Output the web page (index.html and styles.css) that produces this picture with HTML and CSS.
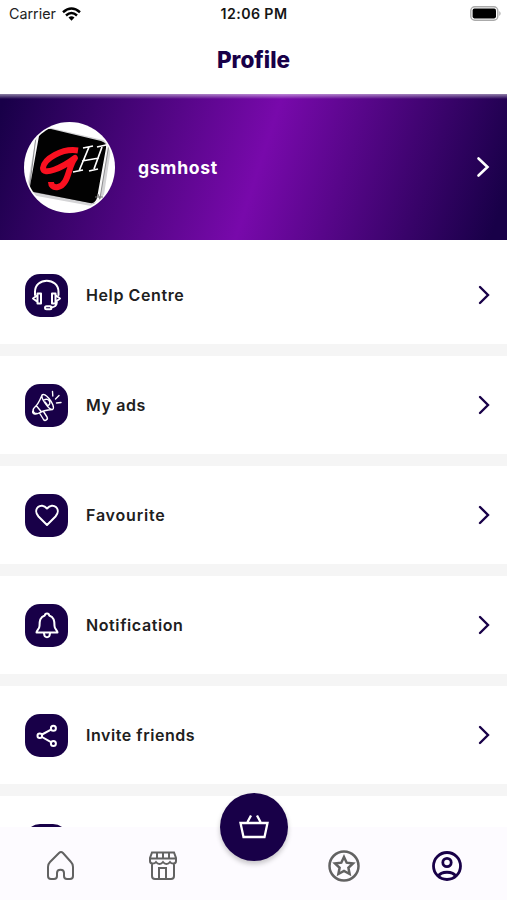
FILE: index.html
```html
<!DOCTYPE html>
<html lang="en">
<head>
<meta charset="utf-8">
<meta name="viewport" content="width=device-width, initial-scale=1">
<title>Profile</title>
<link rel="stylesheet" href="styles.css">
</head>
<body>
<div class="screen">
  <div class="status">
    <div class="carrier"><span>Carrier</span>
      <svg width="19" height="14" viewBox="0 0 19 14" fill="none" stroke="#000" stroke-width="2.5"><path d="M1 5.2Q9.500-2.200 18 5.200M4 8.500Q9.500 3.600 15 8.500"/><path d="M6.500 10.600Q9.500 8 12.500 10.600L9.500 13.800Z" fill="#000" stroke="none"/></svg>
    </div>
    <span class="time">12:06 PM</span>
    <svg class="battery" width="32" height="15" viewBox="0 0 32 15"><rect x=".8" y=".8" width="27" height="13.400" rx="4" fill="#fff" stroke="#aaa" stroke-width="1.400"/><rect x="2.600" y="2.600" width="23.400" height="9.800" rx="1.800"/><path d="M29.300 5Q32 7.500 29.300 10Z" fill="#aaa"/></svg>
  </div>
  <header class="header"><h1>Profile</h1></header>
  <section class="hero">
    <svg class="avatar" width="91" height="91" viewBox="0 0 91 91">
      <defs><clipPath id="round"><circle cx="45.500" cy="45.500" r="43.800"/></clipPath></defs>
      <circle cx="45.500" cy="45.500" r="45.500" fill="#fff"/>
      <g clip-path="url(#round)">
        <path d="M14 3L88 20L78 86L2 72Z" fill="#d4d4d6"/>
        <path d="M13 7L85 22L75 82L5 69Z" fill="#f8f8f8" stroke="#77777a" stroke-width=".8"/>
        <path d="M21 7Q16 8 15 14L6 64Q5 69 10 70L66 81Q71 82 73 76L82 26Q83 21 77 19L27 7Z" fill="#020202"/>
      </g>
      <path d="M54 28.500C38 26 20 37 19 46C19 54 38 46 51 36C44 44 45 63 34 65C29 66 27 63 27 60" fill="none" stroke="#fa1020" stroke-width="6" stroke-linejoin="round"/>
      <path d="M65 25L55 49M78 25L70 47M58 39L75 36M49 50L59 48M65 49L74 47M59 26L69 24M73 25L82 23" fill="none" stroke="#fff" stroke-width="1.700"/>
      <path d="M71 75H79M74 72L76 77" stroke="#777" stroke-width="1"/>
    </svg>
    <span class="username">gsmhost</span>
    <svg class="hero-chevron" width="14" height="22" viewBox="0 0 14 22"><path d="M2.500 2.500L11.500 11L2.500 19.500"/></svg>
  </section>
  <main class="menu">
    <a class="row"><svg class="tile" viewBox="0 0 43 43"><path d="M10 21V18C10 3 33.500 3 33.500 18V21"/><path d="M12.500 19.500H16V29.500H12.500ZM27 19.500H30.500V29.500H27ZM12 21.500L8 24.500L12 27.500M31 21.500L35 24.500L31 27.500M31.800 28.500C31.500 32.500 29 33.300 26 33.300"/><rect x="20" y="32.200" width="6.500" height="3" rx="1.500"/></svg><span class="help">Help Centre</span><svg class="chevron" viewBox="0 0 12 20"><path d="M2 2L10 10L2 18"/></svg></a>
    <a class="row"><svg class="tile thin" viewBox="0 0 43 43"><path d="M17 11C14.500 17 13.500 20 9.500 23.500C6 27 10 31.500 14 29C18 26.500 22 26 27.500 25.500C30 24 27 18 24 14.500C21 11 18.500 9.500 17 11ZM17 11C16 15 24 26 27.500 25.500M12 22.500L16.500 28M19 16C24 13 27 20 23 21.500M20 18L22 20.500M14.500 29L18.500 35.500C20 37.500 23.500 35.500 22 33L18.500 27.500M8.500 26C6.500 28.500 8.500 31 12 29.500M27.500 7.500L27.800 12M30.500 15L34 11.500M31.500 19L36 18.500"/></svg><span class="ads">My ads</span><svg class="chevron" viewBox="0 0 12 20"><path d="M2 2L10 10L2 18"/></svg></a>
    <a class="row"><svg class="tile" viewBox="0 0 43 43"><path d="M22 31L13.500 22.500C7 15 16 7.500 22 14.500C28 7.500 37 15 30.500 22.500Z"/></svg><span class="favourite">Favourite</span><svg class="chevron" viewBox="0 0 12 20"><path d="M2 2L10 10L2 18"/></svg></a>
    <a class="row"><svg class="tile" viewBox="0 0 43 43"><path d="M19.800 11.500C20 8.800 24 8.800 24.200 11.500C29 13 29.500 17 29.500 22C29.500 25 32.500 26.500 32.500 28.500H11.500C11.500 26.500 14.500 25 14.500 22C14.500 17 15 13 19.800 11.500ZM19 29.500C19.500 34.500 24.500 34.500 25 29.500"/></svg><span class="notification">Notification</span><svg class="chevron" viewBox="0 0 12 20"><path d="M2 2L10 10L2 18"/></svg></a>
    <a class="row"><svg class="tile" viewBox="0 0 43 43"><circle cx="14.800" cy="21.800" r="2.300"/><circle cx="28.400" cy="14.300" r="2.500"/><circle cx="28.400" cy="29.500" r="2.500"/><path d="M17 20.500L26 15.600M17 23L26 28.200"/></svg><span class="invite">Invite friends</span><svg class="chevron" viewBox="0 0 12 20"><path d="M2 2L10 10L2 18"/></svg></a>
    <a class="row"><svg class="tile" viewBox="0 0 43 43"></svg></a>
  </main>
  <nav class="tabs">
    <svg class="home" width="30" height="32" viewBox="0 0 30 32"><path d="M13 3L4 12Q2 14 2 17V26Q2 29 5 29H8Q11 29 11 26V23C11 18.500 18 18.500 18 23V26Q18 29 21 29H24Q27 29 27 26V17Q27 14 25 12L17 3Q15 1 13 3Z"/></svg>
    <svg class="store" width="30" height="32" viewBox="0 0 30 32"><path d="M4 2.500H26L28 8V11C28 14 24 14.500 22 12C20 14.500 17 14.500 15 12C13 14.500 10 14.500 8 12C6 14.500 2 14 2 11V8ZM2 8.500H28M9 3V8.500M15 3V8.500M21 3V8.500M4 14V26Q4 29 7 29H23Q26 29 26 26V14M11 29V18H18V29"/></svg>
    <button class="fab" aria-label="Basket"><svg width="30" height="30" viewBox="0 0 30 30"><path d="M1.500 11H28.500L25.500 25H4.500ZM12 3.500L8.500 10M18 3.500L21.500 10"/></svg></button>
    <svg class="star" width="32" height="32" viewBox="0 0 32 32"><circle cx="16" cy="16" r="14.500"/><path d="M16 7L18.700 12.700L25 13.500L20.400 17.800L21.600 24L16 21L10.400 24L11.600 17.800L7 13.500L13.300 12.700Z"/></svg>
    <svg class="active" width="32" height="32" viewBox="0 0 32 32"><circle cx="16" cy="16" r="13.500"/><circle cx="16" cy="12.500" r="4.200"/><path d="M7.500 26C10 21 22 21 24.500 26"/></svg>
  </nav>
</div>
</body>
</html>
```
FILE: styles.css
```css
* { box-sizing: border-box; }
body { margin: 0; background: #fff; font-family: Inter, "Liberation Sans", sans-serif; }
.screen { width: 507px; height: 900px; overflow: hidden; display: flex; flex-direction: column; }
.status { height: 28px; flex: none; display: grid; grid-template-columns: 1fr auto 1fr; align-items: center; padding: 0 5px 1px 9px; }
.carrier { display: flex; gap: 6px; align-items: center; font-size: 14.3px; color: #222; }
.time { font-size: 14.2px; font-weight: 600; letter-spacing: .4px; margin-right: 3px; color: #151515; }
.battery { justify-self: end; }
.header { height: 66px; flex: none; display: flex; justify-content: center; padding-top: 18px; }
.header h1 { margin: 0; font-size: 22.5px; line-height: 28px; font-weight: 800; color: #180048; }
.hero { height: 146px; flex: none; display: flex; align-items: center; padding: 0 17px 0 24px;
  background: linear-gradient(rgba(255,255,255,.5), rgba(255,255,255,0) 5px), linear-gradient(108deg, #180048 1%, #7809ab 51%, #180048 97%); }
.username { margin-left: 23px; flex: 1; color: #fff; font-size: 17.6px; font-weight: 700; letter-spacing: .7px; }
.hero-chevron { fill: none; stroke: #fff; stroke-width: 2.6; stroke-linecap: round; }
.menu { flex: 1; min-height: 0; overflow: hidden; padding-top: 6px; background: #fff; }
.row { height: 110px; display: flex; align-items: center; padding: 0 17px 0 25px; border-bottom: 12px solid #f5f5f5; }
.row span { flex: 1; margin-left: 18px; font-size: 16px; font-weight: 600; letter-spacing: .6px; color: #202020; }
.row .favourite { letter-spacing: .8px; }
.row .invite { letter-spacing: .55px; }
.tile { width: 43px; height: 43px; border-radius: 15px; background: #180048; fill: none; stroke: #fff; stroke-width: 2; stroke-linejoin: round; stroke-linecap: round; }
.thin { stroke-width: 1.4; }
.chevron { width: 12px; height: 20px; fill: none; stroke: #180048; stroke-width: 2.4; stroke-linecap: round; }
.tabs { height: 73px; flex: none; background: #fdfbff; display: grid; grid-template-columns: 91px 114px 97px 84px 121px; align-items: center; }
.tabs > svg { fill: none; stroke: #626262; stroke-width: 2; justify-self: center; margin-top: 5px; }
.tabs > .home { margin-left: 31px; }
.tabs > .store { margin-left: 29px; }
.tabs > .star { stroke-width: 2.5; }
.tabs > .active { stroke: #180048; stroke-width: 2.8; }
.fab { width: 68px; height: 68px; padding: 0; border: 0; border-radius: 50%; background: #180048; display: grid; place-items: center; justify-self: center; align-self: start; margin-top: -34px; box-shadow: 0 3px 5px rgba(0,0,0,.22); position: relative; }
.fab svg { fill: none; stroke: #fff; stroke-width: 2.3; }
```
